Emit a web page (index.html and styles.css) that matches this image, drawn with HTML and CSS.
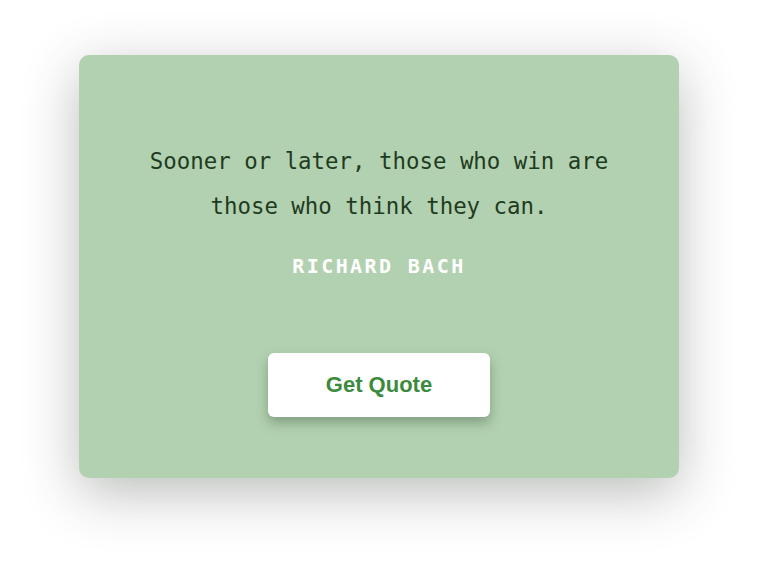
FILE: index.html
```html
<!DOCTYPE html>
<html lang="en">
<head>
<meta charset="utf-8">
<title>Quote Generator</title>
<link rel="stylesheet" href="styles.css">
</head>
<body>
<main class="card">
  <p class="quote">Sooner or later, those who win are those who think they can.</p>
  <p class="author">RICHARD BACH</p>
  <button class="btn" type="button">Get Quote</button>
</main>
</body>
</html>
```
FILE: styles.css
```css
html, body {
  margin: 0;
  padding: 0;
  background: #ffffff;
}
body {
  display: flex;
  justify-content: center;
  align-items: flex-start;
  min-height: 567px;
  padding-right: 4px;
  box-sizing: border-box;
}
.card {
  box-sizing: border-box;
  width: 600px;
  height: 423px;
  margin-top: 55px;
  background: #b2d1b0;
  border-radius: 10px;
  box-shadow: 0 15px 55px rgba(40, 50, 40, 0.32);
  display: flex;
  flex-direction: column;
  align-items: center;
  padding: 84px 60px 0;
}
.quote {
  margin: 0;
  width: 470px;
  text-align: center;
  font-family: "DejaVu Sans Mono", "Liberation Mono", monospace;
  font-size: 22.4px;
  line-height: 45px;
  color: #1f3b1f;
}
.author {
  margin: 22px 0 0;
  font-family: "DejaVu Sans Mono", "Liberation Mono", monospace;
  font-weight: bold;
  font-size: 20px;
  letter-spacing: 2.4px;
  line-height: 30px;
  color: #ffffff;
}
.btn {
  margin-top: 72px;
  width: 222px;
  height: 64px;
  border: none;
  border-radius: 6px;
  background: #ffffff;
  color: #3b8a3d;
  font-family: "Liberation Sans", Arial, sans-serif;
  font-weight: bold;
  font-size: 22px;
  box-shadow: 0 6px 12px rgba(40, 70, 40, 0.35);
  cursor: pointer;
}
```
